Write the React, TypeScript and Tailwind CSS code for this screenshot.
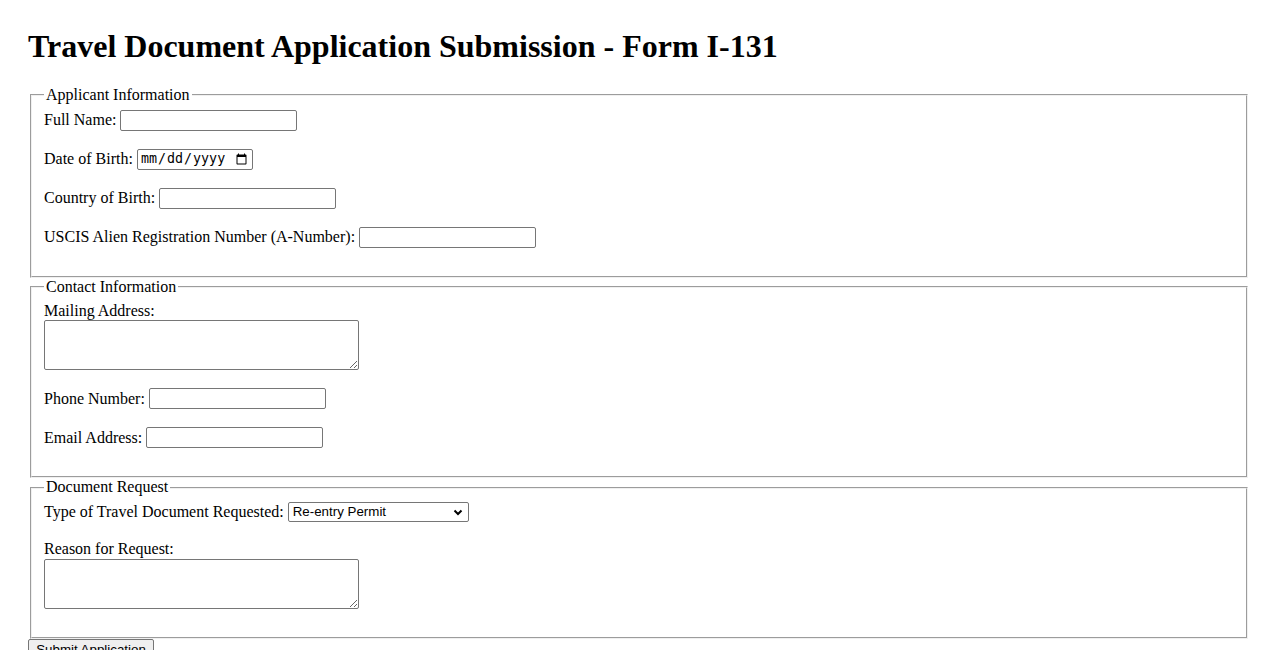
import React from "react";

const inputCls =
  "block h-[21px] border border-[#767676] rounded-[2px] px-[2px] py-[1px] bg-white text-[13.333px] [font-family:'Liberation_Sans',Arial,sans-serif] text-black";

function Fieldset({ legend, children }: { legend: string; children: React.ReactNode }) {
  return (
    <fieldset className="mx-[2px] border-2 [border-style:groove] border-[rgb(240,240,240)] pt-[5.6px] px-[12px] pb-[10px] min-w-min">
      <legend className="px-[2px] leading-[18.4px]">{legend}</legend>
      {children}
    </fieldset>
  );
}

function TextRow({ label }: { label: string }) {
  return (
    <div className="flex items-center gap-[4px] h-[21px] mb-[18px]">
      <label className="whitespace-nowrap">{label}</label>
      <input type="text" className={inputCls + " w-[177px]"} />
    </div>
  );
}

export default function App() {
  return (
    <div className="min-h-[650px] bg-white text-black text-[16px] leading-[18.4px] [font-family:'Liberation_Serif','Times_New_Roman',serif] px-[28px] pt-[6px]">
      <h1 className="text-[32px] leading-[36.8px] font-bold mt-[22.44px] mb-[20.44px]">
        Travel Document Application Submission - Form I-131
      </h1>
      <form onSubmit={(e) => e.preventDefault()}>
        <Fieldset legend="Applicant Information">
          <TextRow label="Full Name:" />
          <div className="flex items-center gap-[4px] h-[21px] mb-[18px]">
            <label className="whitespace-nowrap">Date of Birth:</label>
            <input
              type="date"
              className="block h-[21px] w-[116px] border border-[#767676] rounded-[2px] px-[2px] py-[1px] bg-white text-[13.333px] [font-family:'DejaVu_Sans_Mono','Liberation_Mono',monospace] text-black"
            />
          </div>
          <TextRow label="Country of Birth:" />
          <TextRow label="USCIS Alien Registration Number (A-Number):" />
        </Fieldset>

        <Fieldset legend="Contact Information">
          <div className="h-[18.4px]">
            <label>Mailing Address:</label>
          </div>
          <textarea className="block w-[315px] h-[50px] border border-[#767676] rounded-[2px] p-[2px] bg-white text-[13.333px] [font-family:'DejaVu_Sans_Mono',monospace] mb-[18.4px]" />
          <TextRow label="Phone Number:" />
          <TextRow label="Email Address:" />
        </Fieldset>

        <Fieldset legend="Document Request">
          <div className="flex items-center gap-[4px] h-[20px] mb-[18px]">
            <label className="whitespace-nowrap">Type of Travel Document Requested:</label>
            <div className="relative">
              <select
                defaultValue="reentry"
                className="block appearance-none h-[20px] w-[181px] border border-[#767676] rounded-[2px] pl-[4px] pr-[18px] bg-white text-[13.333px] leading-[16px] [font-family:'Liberation_Sans',Arial,sans-serif] text-black"
              >
                <option value="reentry">Re-entry Permit</option>
                <option value="refugee">Refugee Travel Document</option>
                <option value="parole">Advance Parole Document</option>
              </select>
              <svg
                className="pointer-events-none absolute right-[6px] top-[7px]"
                width="10"
                height="7"
                viewBox="0 0 10 7"
              >
                <path d="M1.5 1.5 L5 5 L8.5 1.5" fill="none" stroke="#000" strokeWidth="2" />
              </svg>
            </div>
          </div>
          <div className="h-[18.4px]">
            <label>Reason for Request:</label>
          </div>
          <textarea className="block w-[315px] h-[50px] border border-[#767676] rounded-[2px] p-[2px] bg-white text-[13.333px] [font-family:'DejaVu_Sans_Mono',monospace] mb-[18.4px]" />
        </Fieldset>

        <button
          type="submit"
          className="block w-[126px] h-[21px] px-[6px] py-[1px] border border-[#767676] rounded-[2px] bg-[#efefef] text-[13.333px] leading-[15px] [font-family:'Liberation_Sans',Arial,sans-serif] text-black whitespace-nowrap"
        >
          Submit Application
        </button>
      </form>
    </div>
  );
}
